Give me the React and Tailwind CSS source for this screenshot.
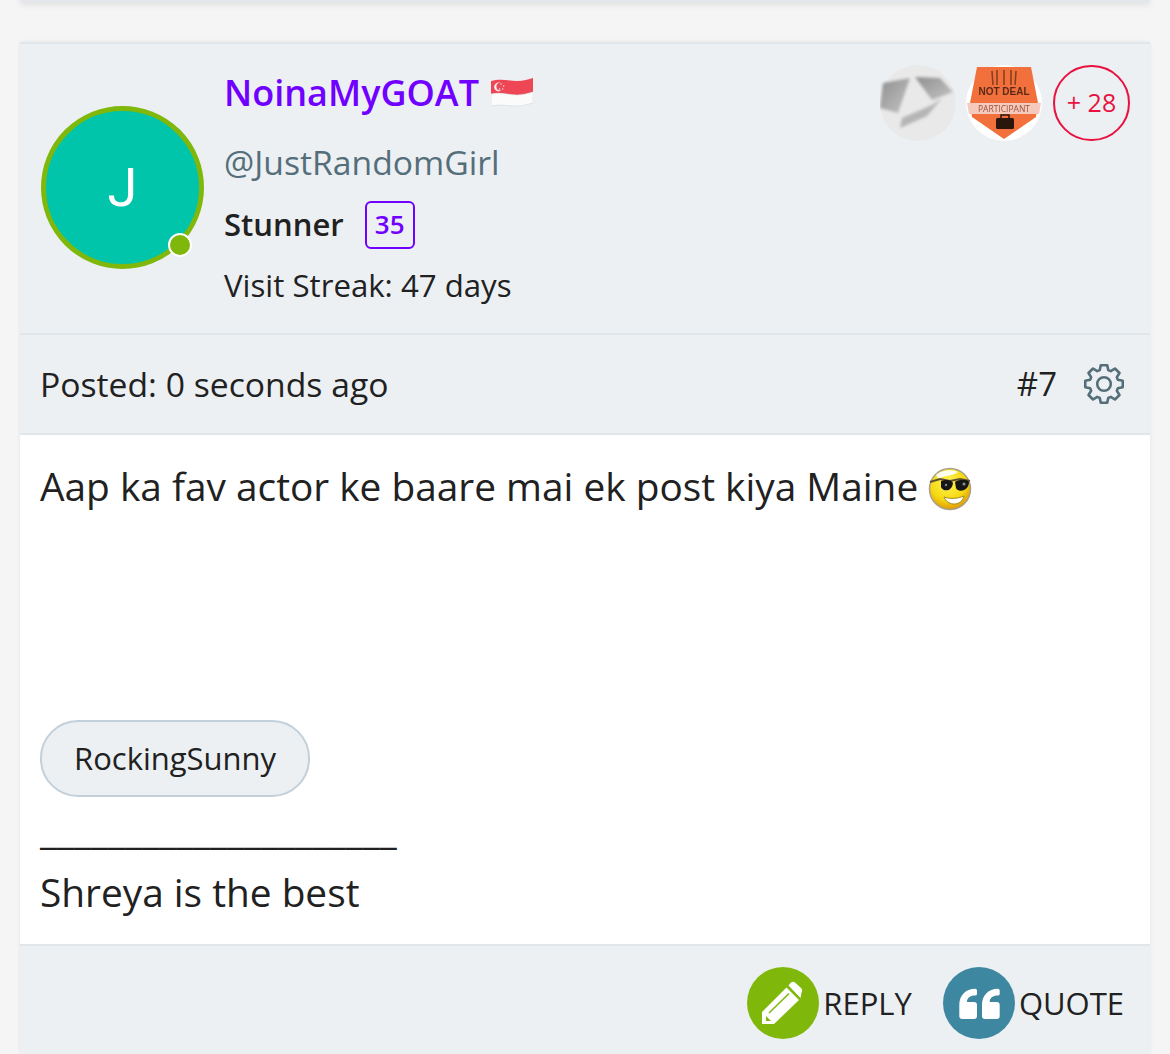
import React from 'react';

const SgFlag = () => (
  <svg viewBox="0 0 42 30" className="w-[42px] h-[30px] ml-[12px] mt-[-3px]">
    <path d="M0 4 C10 1 18 4 26 4 C32 4 38 2 42 1 L42 15 C38 16 32 18 26 18 C18 18 10 15 0 17 Z" fill="#ee4655" />
    <path d="M0 17 C10 15 18 18 26 18 C32 18 38 16 42 15 L42 26 C38 27 32 29 26 29 C18 29 10 27 0 29 Z" fill="#fbfbfb" stroke="#d5d8da" strokeWidth="0.6" />
    <circle cx="7.5" cy="10" r="4.4" fill="#f7f0f0" />
    <circle cx="9.3" cy="9.6" r="3.9" fill="#ee4655" />
    <circle cx="10" cy="7" r="0.7" fill="#f7f0f0" />
    <circle cx="12.7" cy="9" r="0.7" fill="#f7f0f0" />
    <circle cx="11.7" cy="12" r="0.7" fill="#f7f0f0" />
    <circle cx="8.6" cy="12" r="0.7" fill="#f7f0f0" />
  </svg>
);

const GreyBadge = () => (
  <svg viewBox="0 0 76 76" className="w-[76px] h-[76px]">
    <defs>
      <filter id="blurGrey"><feGaussianBlur stdDeviation="1.4" /></filter>
      <linearGradient id="greyBand" x1="0" y1="0" x2="1" y2="1">
        <stop offset="0%" stopColor="#8f8f8f" />
        <stop offset="100%" stopColor="#c4c4c4" />
      </linearGradient>
    </defs>
    <circle cx="38" cy="38" r="38" fill="#e9e9e9" />
    <g filter="url(#blurGrey)">
      <path d="M3 18 L30 13 L18 48 L0 43 Z" fill="url(#greyBand)" />
      <path d="M35 12 L60 13 L73 27 L52 35 Z" fill="url(#greyBand)" />
      <path d="M62 33 L47 51 L20 63 L22 53 L52 40 Z" fill="#b5b5b5" />
    </g>
  </svg>
);

const OrangeBadge = () => (
  <svg viewBox="0 0 76 76" className="w-[76px] h-[76px]">
    <defs>
      <filter id="blurOrange"><feGaussianBlur stdDeviation="0.5" /></filter>
    </defs>
    <circle cx="38" cy="38" r="38" fill="#ffffff" />
    <g filter="url(#blurOrange)">
      <path d="M11 2 L65 2 L72 38 L70 52 L38 74 L6 52 L4 38 Z" fill="#f2703b" />
      <path d="M26 6 L27 20 M31 5 L31 20 M38 5 L38 20 M45 5 L45 20 M50 6 L49 20" stroke="#8a3f20" strokeWidth="1.6" fill="none" />
      <text x="38" y="30" textAnchor="middle" fontSize="10" fontWeight="700" fill="#5a2a17" fontFamily="'Liberation Sans', sans-serif">NOT DEAL</text>
      <path d="M1 38 L75 38 L73 49 L3 49 Z" fill="#f6c9bd" />
      <text x="38" y="47" textAnchor="middle" fontSize="8.5" fill="#9a5236" fontFamily="'Open Sans', sans-serif">PARTICIPANT</text>
      <rect x="30" y="53" width="18" height="11" rx="1.5" fill="#2a1510" />
      <path d="M35 53 L35 50 L43 50 L43 53" stroke="#2a1510" strokeWidth="1.5" fill="none" />
    </g>
  </svg>
);

const CoolSmiley = () => (
  <svg viewBox="0 0 44 44" className="w-[44px] h-[44px] ml-[10px] inline-block align-[-10px]">
    <defs>
      <radialGradient id="smileyFill" cx="45%" cy="35%" r="65%">
        <stop offset="0%" stopColor="#fff35a" />
        <stop offset="65%" stopColor="#f6d90f" />
        <stop offset="100%" stopColor="#e09a08" />
      </radialGradient>
    </defs>
    <circle cx="22" cy="22" r="20.5" fill="url(#smileyFill)" stroke="#a8a08a" strokeWidth="1.5" />
    <path d="M8 8 C13 3 24 2 30 5 C26 9 16 8 11 12 Z" fill="#fffdf0" />
    <path d="M2 15 L12 12 L22 14 L32 12 L42 14" stroke="#5c5030" strokeWidth="2" fill="none" />
    <path d="M13 14 C18 12 24 13 25 16 C24 25 15 25 13 20 Z" fill="#161616" />
    <path d="M27 15 C31 12 39 12 41 15 C41 24 30 26 28 21 Z" fill="#161616" />
    <circle cx="36" cy="17" r="1.6" fill="#8c8c8c" />
    <circle cx="18" cy="18" r="1.2" fill="#8c8c8c" />
    <path d="M16 30 C21 32 29 32 36 29 C34 39 20 40 16 30 Z" fill="#ffffff" stroke="#a38a20" strokeWidth="1" />
  </svg>
);

// 8 squarish teeth, tooth at 12 o'clock
const gearPath = () => {
  const pts = [];
  for (let i = 0; i < 8; i++) {
    const a = (i * Math.PI) / 4 - Math.PI / 2;
    [[14.5, -0.3], [19, -0.17], [19, 0.17], [14.5, 0.3]].forEach(([r, da]) => {
      pts.push(`${(21 + r * Math.cos(a + da)).toFixed(2)} ${(21 + r * Math.sin(a + da)).toFixed(2)}`);
    });
  }
  return `M${pts.join(' L')} Z`;
};

const Gear = () => (
  <svg viewBox="0 0 42 42" className="w-[42px] h-[42px]" fill="none" stroke="#546e7a" strokeWidth="2.6" strokeLinejoin="round">
    <path d={gearPath()} />
    <circle cx="21" cy="21" r="6.8" />
  </svg>
);

const PencilIcon = () => (
  <svg viewBox="0 0 72 72" className="w-[72px] h-[72px]" fill="white">
    <path d="M15 45 L39.5 20.5 L52 33 L27 57 L15 57 Z" />
    <path d="M41.5 18.5 L44 15.5 Q46 14 48 15.5 L54 21 Q56 23 54.5 25.5 L53.5 31 Z" />
    <path d="M22 46 L42 26.5" stroke="#7fb80b" strokeWidth="1.6" fill="none" />
    <path d="M19 49 L24 54 L19 54 Z" fill="#7fb80b" />
  </svg>
);

const QuoteIcon = () => {
  const d = 'M16.3 38 C16.3 28 23 21.7 32 21.7 Q34 21.7 34 23.5 V27 Q34 28.5 32 28.5 C27 28.5 24 31 24 35 H31 Q34 35 34 38 V49 Q34 52 31 52 H19.3 Q16.3 52 16.3 49 Z';
  return (
    <svg viewBox="0 0 72 72" className="w-[72px] h-[72px]" fill="white">
      <path d={d} />
      <path d={d} transform="translate(22.7 0)" />
    </svg>
  );
};

export default function App() {
  return (
    <div className="bg-[#f5f5f5] font-['Open_Sans',sans-serif] text-[#212121] overflow-hidden h-[1054px]">
      <div className="mx-[20px] h-[2px] bg-[#e3e7eb] shadow-[0_1px_6px_rgba(0,0,0,0.25)]" />
      <div className="mx-[20px] mt-[40px] h-[1012px] flex flex-col bg-[#ecf0f3] border-t-2 border-[#e1e6ea] shadow-[0_0_4px_rgba(0,0,0,0.07)]">
        <header className="h-[291px] flex justify-between border-b-2 border-[#e1e6ea] pl-[21px] pr-[20px]">
          <div className="flex">
            <div className="relative mt-[62px] w-[163px] h-[163px] rounded-full bg-[#00c5ab] border-[5px] border-[#7fb80b] flex items-center justify-center shrink-0">
              <span className="text-white text-[54px] leading-none font-['Roboto',sans-serif]">J</span>
              <span className="absolute right-[7px] bottom-[7px] w-[24px] h-[24px] rounded-full bg-[#7fb80b] border-2 border-white" />
            </div>
            <div className="ml-[20px] pt-[23px]">
              <div className="flex items-center h-[52px]">
                <span className="text-[36px] font-semibold text-[#7000ff] leading-none">NoinaMyGOAT</span>
                <SgFlag />
              </div>
              <div className="text-[33.7px] text-[#546e7a] leading-none mt-[27px]">@JustRandomGirl</div>
              <div className="flex items-center mt-[21px]">
                <span className="text-[31px] font-semibold leading-none">Stunner</span>
                <span className="ml-[21px] w-[50px] h-[48px] rounded-[6px] border-2 border-[#7000ff] text-[#7000ff] text-[26px] font-semibold flex items-center justify-center">35</span>
              </div>
              <div className="text-[31.2px] leading-none mt-[21px]">Visit Streak: 47 days</div>
            </div>
          </div>
          <div className="flex pt-[21px]">
            <GreyBadge />
            <div className="ml-[10px]"><OrangeBadge /></div>
            <div className="ml-[11px] w-[77px] h-[76px] rounded-full border-2 border-[#e8113f] text-[#e8113f] text-[25px] flex items-center justify-center">+ 28</div>
          </div>
        </header>
        <div className="h-[100px] flex items-center justify-between border-b-2 border-[#e1e6ea] pl-[20px] pr-[25px] shrink-0">
          <span className="text-[33.7px]">Posted: 0 seconds ago</span>
          <div className="flex items-center gap-[26px]">
            <span className="text-[33px]">#7</span>
            <Gear />
          </div>
        </div>
        <div className="h-[511px] bg-white border-b-2 border-[#e1e6ea] px-[20px] shrink-0 flex flex-col">
          <div className="text-[38.8px] mt-[23px] leading-[56px]">Aap ka fav actor ke baare mai ek post kiya Maine<CoolSmiley /></div>
          <div className="mt-[206px] self-start h-[77px] px-[32px] rounded-[38px] border-2 border-[#c3d0da] bg-[#ecf0f3] text-[31px] flex items-center">RockingSunny</div>
          <div className="mt-[12px] h-[40px] text-[38.8px] leading-[40px]">_____________________</div>
          <div className="text-[38.8px] leading-[56px] mt-[15px]">Shreya is the best</div>
        </div>
        <footer className="flex-1 flex justify-end items-start pt-[21px] pr-[26px] gap-[31px]">
          <div className="flex items-center gap-[4px]">
            <span className="w-[72px] h-[72px] rounded-full bg-[#7fb80b]"><PencilIcon /></span>
            <span className="text-[31px]">REPLY</span>
          </div>
          <div className="flex items-center gap-[4px]">
            <span className="w-[72px] h-[72px] rounded-full bg-[#3e87a1]"><QuoteIcon /></span>
            <span className="text-[31px]">QUOTE</span>
          </div>
        </footer>
      </div>
    </div>
  );
}
